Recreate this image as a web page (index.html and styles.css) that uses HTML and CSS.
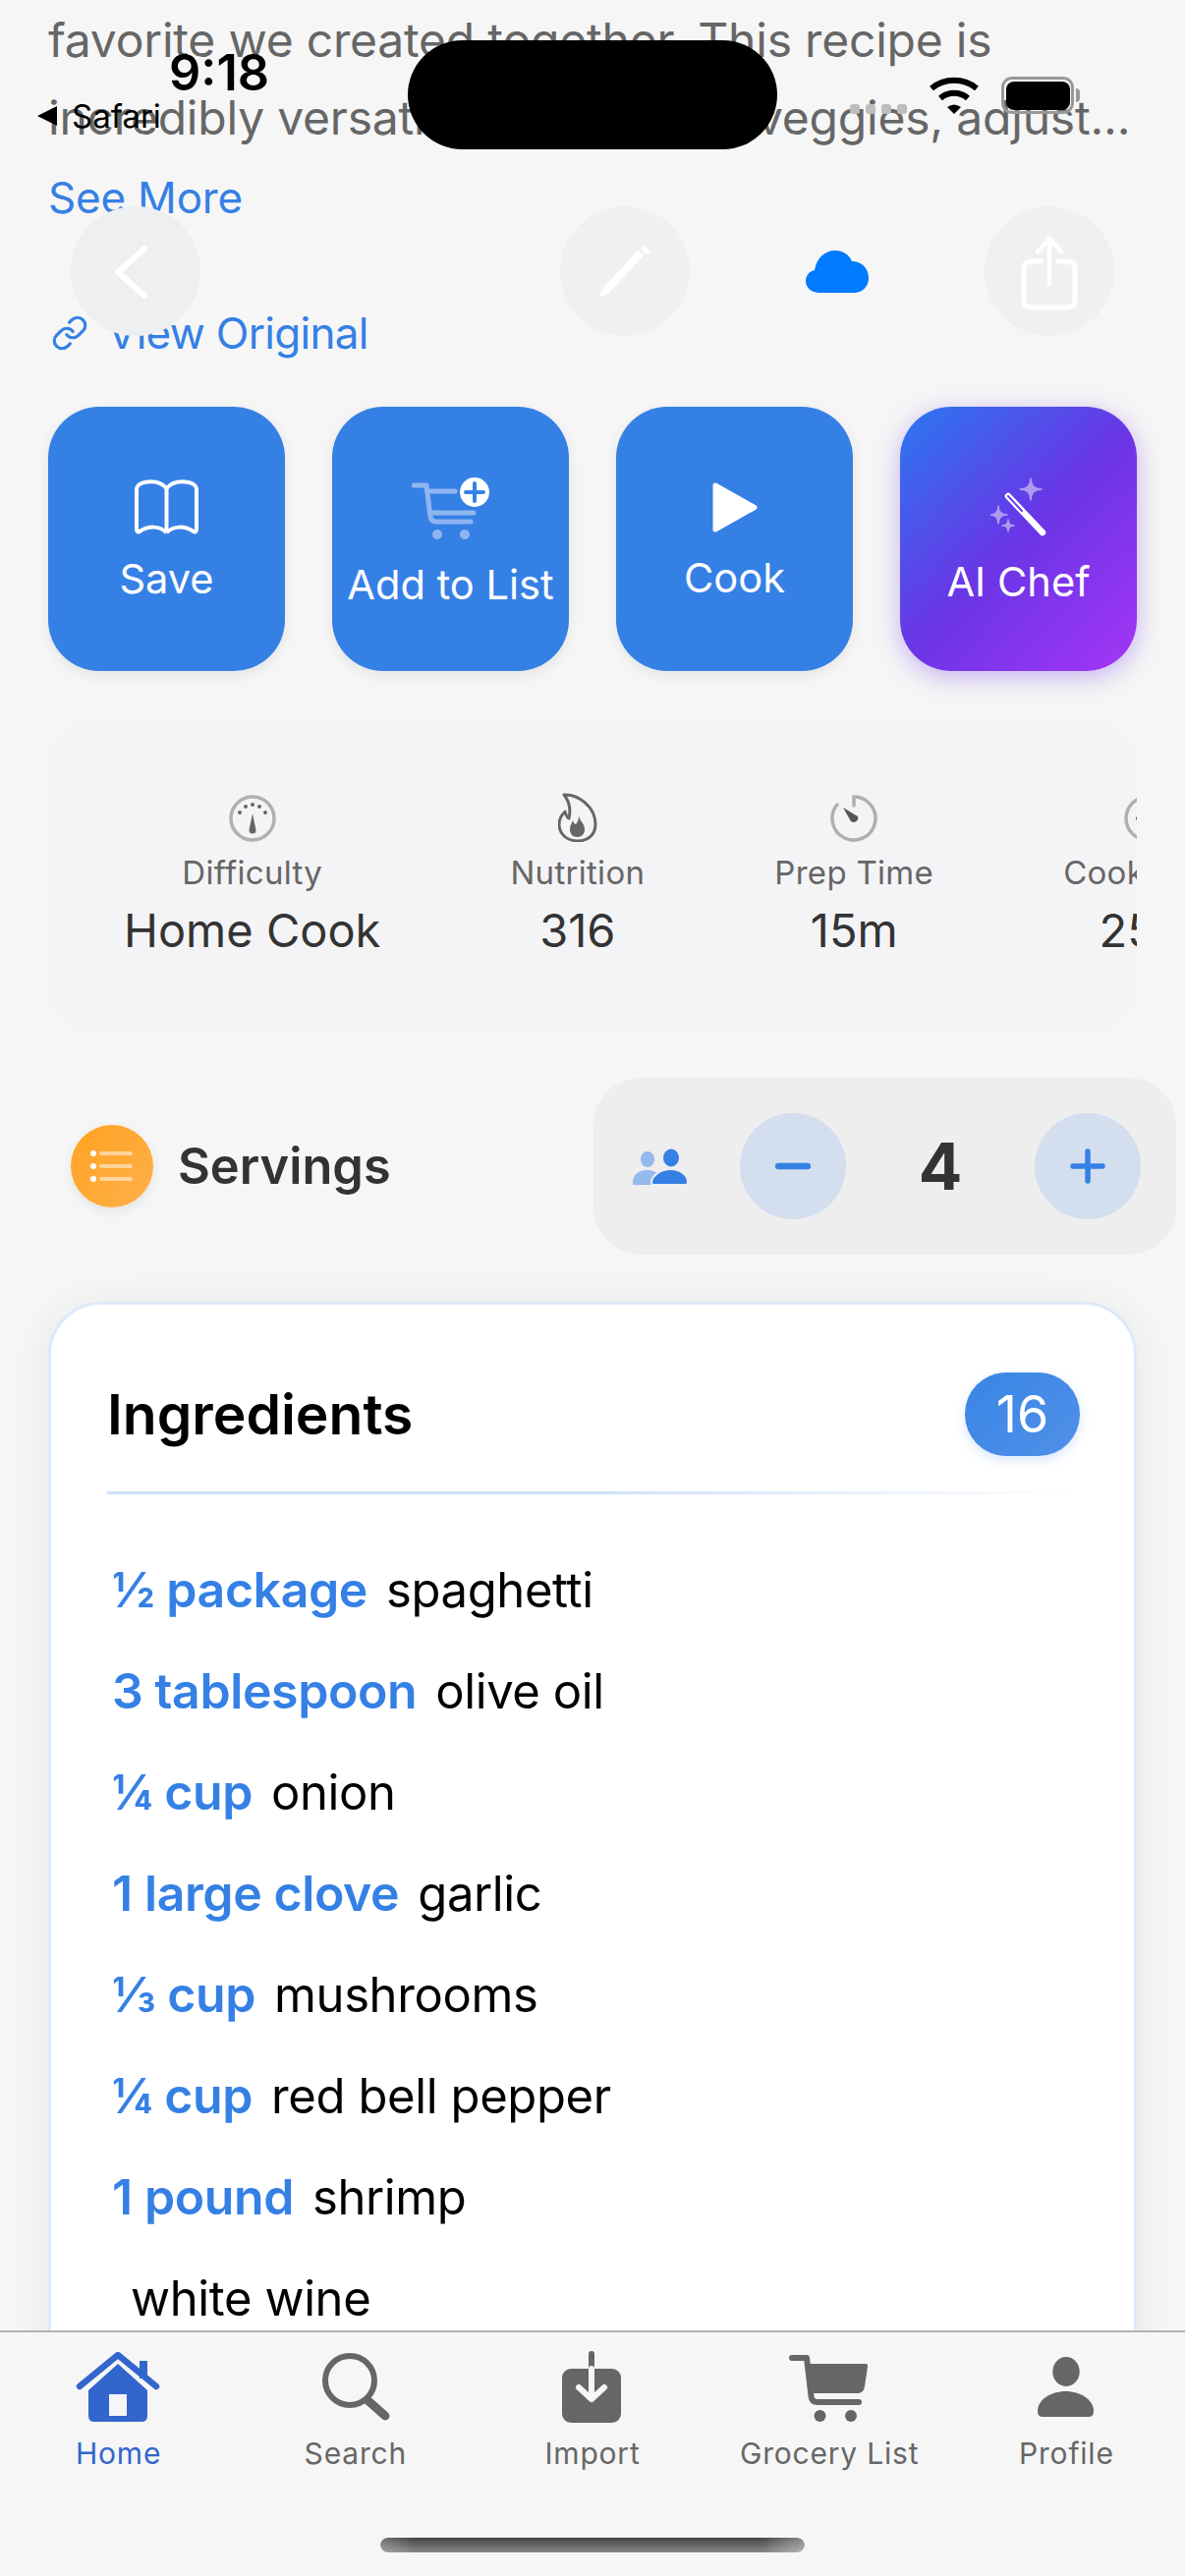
FILE: index.html
```html
<!DOCTYPE html>
<html lang="en">
<head>
    <meta charset="UTF-8">
    <meta name="viewport" content="width=device-width, initial-scale=1.0">
    <title>Recipe</title>
    <link rel="stylesheet" href="styles.css">
</head>
<body>
<div class="screen">

    <main class="scroll">
        <p class="description">favorite we created together. This recipe is incredibly versatile. Add in your veggies, adjust...</p>
        <a class="see-more">See More</a>
        <a class="view-original">
            <svg width="38" height="38" viewBox="0 0 24 24" fill="none" stroke="#3580e5" stroke-width="2" stroke-linecap="round" stroke-linejoin="round">
                <path d="M10 13a5 5 0 0 0 7.54.54l3-3a5 5 0 0 0-7.07-7.07l-1.72 1.71"/>
                <path d="M14 11a5 5 0 0 0-7.54-.54l-3 3a5 5 0 0 0 7.07 7.07l1.71-1.71"/>
            </svg>
            View Original
        </a>

        <div class="actions">
            <button class="action">
                <svg width="65" height="59" viewBox="0 0 65 59" fill="none" stroke="#fff" stroke-width="4" stroke-linejoin="round">
                    <path d="M32.5 12C27 6 18 4.5 10 6 5 7 2 10 2 13V54C2 56 3.5 57 5 56 14 50 25 50 32.5 57"/>
                    <path d="M32.5 12C38 6 47 4.5 55 6 60 7 63 10 63 13V54C63 56 61.5 57 60 56 51 50 40 50 32.5 57"/>
                    <path d="M32.5 12V57"/>
                </svg>
                <span>Save</span>
            </button>
            <button class="action">
                <svg width="79" height="71" viewBox="0 0 79 71" fill="none">
                    <g stroke="#8fb5f0" stroke-width="5" stroke-linecap="round" stroke-linejoin="round">
                        <path d="M2 15H15L19 47Q20 52 25 52H60"/>
                        <path d="M16 21H44"/>
                        <path d="M19 43H63"/>
                    </g>
                    <circle cx="26" cy="65" r="5" fill="#8fb5f0"/>
                    <circle cx="54" cy="65" r="5" fill="#8fb5f0"/>
                    <circle cx="64" cy="22" r="15" fill="#fff"/>
                    <path d="M64 13V31M55 22H73" stroke="#3580e5" stroke-width="4" stroke-linecap="round"/>
                </svg>
                <span>Add to List</span>
            </button>
            <button class="action">
                <svg width="46" height="57" viewBox="0 0 46 57">
                    <path d="M3 8V53L43 30.5Z" fill="#fff" stroke="#fff" stroke-width="5" stroke-linejoin="round"/>
                </svg>
                <span>Cook</span>
            </button>
            <button class="action action-ai">
                <svg width="57" height="65" viewBox="0 0 57 65" fill="none">
                    <path d="M18 23L53 60" stroke="#fff" stroke-width="6.500" stroke-linecap="round"/>
                    <path d="M18 23L32 38" stroke="#6246e6" stroke-width="2" stroke-linecap="round"/>
                    <path d="M41 5Q41 16 52 16 41 16 41 27 41 16 30 16 41 16 41 5ZM8 33Q8 42 17 42 8 42 8 51 8 42 0 42 8 42 8 33ZM18 47Q18 53 24 53 18 53 18 59 18 53 12 53 18 53 18 47Z" fill="#ac9cf0" stroke="#ac9cf0" stroke-width="1.6" stroke-linejoin="round"/>
                </svg>
                <span>AI Chef</span>
            </button>
        </div>

        <div class="stats">
            <div class="stat">
                <svg width="48" height="48" viewBox="0 0 48 48" fill="none">
                    <circle cx="24" cy="24" r="22" stroke="#b0b0b0" stroke-width="3.5"/>
                    <g fill="#666">
                        <circle cx="24" cy="10" r="2"/><circle cx="17" cy="12" r="2"/><circle cx="31" cy="12" r="2"/>
                        <circle cx="11" cy="18" r="2"/><circle cx="37" cy="18" r="2"/>
                        <path d="M24 19L27.5 36A3.5 3.5 0 0 1 20.500 36Z"/>
                    </g>
                </svg>
                <span class="stat-label">Difficulty</span>
                <span class="stat-value">Home Cook</span>
            </div>
            <div class="stat">
                <svg class="flame" width="40" height="50" viewBox="0 0 40 50" fill="none">
                    <path d="M6 2C20 1 38 14 38 32 38 43 30 49 20 49 9 49 1 42 1 32 1 26 4 22 7 19 8 23 9 25 11 26 13 17 11 8 6 2Z" stroke="#666" stroke-width="3" stroke-linejoin="round"/>
                    <path d="M21 23C22 29 27 31 27 37 27 42 24 45 19.500 45 15 45 12 42 12 37 12 33 14 31 15 28 16 31 17 32 18 32 20 30 21 27 21 23Z" fill="#666"/>
                </svg>
                <span class="stat-label">Nutrition</span>
                <span class="stat-value">316</span>
            </div>
            <div class="stat">
                <svg width="48" height="48" viewBox="0 0 48 48" fill="none">
                    <path d="M24 11V2A22 22 0 1 1 7 10" stroke="#b0b0b0" stroke-width="3.5" stroke-linecap="round"/>
                    <path d="M13 13L28 22A4.500 4.500 0 0 1 21 27Z" fill="#555"/>
                </svg>
                <span class="stat-label">Prep Time</span>
                <span class="stat-value">15m</span>
            </div>
            <div class="stat">
                <svg width="48" height="48" viewBox="0 0 48 48" fill="none">
                    <circle cx="24" cy="24" r="22" stroke="#b0b0b0" stroke-width="3.5"/>
                    <path d="M12 24H28" stroke="#666" stroke-width="3"/>
                </svg>
                <span class="stat-label">Cook Time</span>
                <span class="stat-value">25m</span>
            </div>
        </div>

        <div class="servings">
            <div class="servings-title">
                <span class="list-badge">
                    <svg width="84" height="84" viewBox="0 0 84 84" fill="none">
                        <g fill="#fff"><circle cx="23" cy="29" r="3"/><circle cx="23" cy="42" r="3"/><circle cx="23" cy="55" r="3"/></g>
                        <path d="M31 29H61M31 42H61M31 55H61" stroke="#fff" stroke-opacity=".5" stroke-width="4" stroke-linecap="round"/>
                    </svg>
                </span>
                <span class="servings-name">Servings</span>
            </div>
            <div class="stepper">
                <svg class="people" width="56" height="37" viewBox="0 0 56 37">
                    <ellipse cx="15" cy="11" rx="7" ry="8" fill="#94b9ec"/>
                    <path d="M0 37V34C0 26 7 22 14 22 20 22 24 24 27 27V37Z" fill="#94b9ec"/>
                    <ellipse cx="39" cy="9.500" rx="8" ry="9" fill="#3580e5"/>
                    <path d="M21 37Q19 37 19 34C20 27 29 21 38.500 21 48 21 56 27 56 34Q56 37 54 37Z" fill="#3580e5" stroke="#eee" stroke-width="2"/>
                </svg>
                <button class="step">
                    <svg width="36" height="36" viewBox="0 0 36 36"><path d="M3 18H33" stroke="#3580e5" stroke-width="6.500" stroke-linecap="round"/></svg>
                </button>
                <span class="count">4</span>
                <button class="step">
                    <svg width="36" height="36" viewBox="0 0 36 36"><path d="M3 18H33M18 3V33" stroke="#3580e5" stroke-width="5.500" stroke-linecap="round"/></svg>
                </button>
            </div>
        </div>

        <section class="card">
            <div class="card-head">
                <h2>Ingredients</h2>
                <span class="badge">16</span>
            </div>
            <div class="divider"></div>
            <ul class="ingredients">
                <li><b>½ package</b><span>spaghetti</span></li>
                <li><b>3 tablespoon</b><span>olive oil</span></li>
                <li><b>¼ cup</b><span>onion</span></li>
                <li><b>1 large clove</b><span>garlic</span></li>
                <li><b>⅓ cup</b><span>mushrooms</span></li>
                <li><b>¼ cup</b><span>red bell pepper</span></li>
                <li><b>1 pound</b><span>shrimp</span></li>
                <li><b></b><span>white wine</span></li>
            </ul>
        </section>
    </main>

    <nav class="tabbar">
        <a class="tab tab-active">
            <svg width="100" height="74" viewBox="0 0 100 74">
                <path d="M49 13L79 40V66Q79 72 73 72H25Q19 72 19 66V40ZM40 44V66H58V44Z" fill="#3366cc" fill-rule="evenodd"/>
                <path d="M71 10H79V28H71Z" fill="#3366cc"/>
                <path d="M10 36L49 4 88 36" fill="none" stroke="#3366cc" stroke-width="6.500" stroke-linecap="round" stroke-linejoin="round"/>
            </svg>
            <span>Home</span>
        </a>
        <a class="tab">
            <svg width="100" height="74" viewBox="0 0 100 74" fill="none" stroke="#666" stroke-linecap="round">
                <circle cx="44" cy="30" r="25" stroke-width="6"/>
                <path d="M62 50L80 66" stroke-width="9"/>
            </svg>
            <span>Search</span>
        </a>
        <a class="tab">
            <svg width="100" height="74" viewBox="0 0 100 74" fill="none" stroke-linecap="round" stroke-linejoin="round">
                <rect x="19" y="18" width="60" height="55" rx="9" fill="#666"/>
                <path d="M49 3V18" stroke="#666" stroke-width="6"/>
                <path d="M49 18V49M36 37L49 49 62 37" stroke="#f6f6f6" stroke-width="6"/>
            </svg>
            <span>Import</span>
        </a>
        <a class="tab">
            <svg width="100" height="74" viewBox="0 0 100 74" fill="none">
                <path d="M12 7H27L31.500 46Q32 52 38 52H80" stroke="#666" stroke-width="6" stroke-linecap="round" stroke-linejoin="round"/>
                <path d="M27 13H87Q89.500 13 89 16L86 36Q85 43 79 43H31Z" fill="#666"/>
                <circle cx="40.500" cy="66" r="6" fill="#666"/>
                <circle cx="72" cy="66" r="6" fill="#666"/>
            </svg>
            <span>Grocery List</span>
        </a>
        <a class="tab">
            <svg width="100" height="74" viewBox="0 0 100 74" fill="#666">
                <ellipse cx="50" cy="21" rx="13.700" ry="15"/>
                <path d="M21 61C21 50 34 41 49.500 41 65 41 78 50 78 61Q78 67 73 67H26Q21 67 21 61Z"/>
            </svg>
            <span>Profile</span>
        </a>
    </nav>
    <div class="home-bar"></div>

    <!-- status bar and floating header sit over the scrolled content -->
    <div class="island"></div>
    <span class="time">9:18</span>
    <span class="back-app">
        <svg width="22" height="20" viewBox="0 0 22 20"><path d="M0 10L20 0V20Z" fill="#000"/></svg>
        Safari
    </span>
    <div class="status-right">
        <span class="signal"><i></i><i></i><i></i><i></i></span>
        <svg width="52" height="38" viewBox="0 0 52 38" fill="none" stroke="#000" stroke-width="6">
            <path d="M3 12C16 1 36 1 49 12"/>
            <path d="M12 22C20 15 32 15 40 22"/>
            <path d="M19 31Q26 26 33 31L26 38Z" fill="#000" stroke="none"/>
        </svg>
        <span class="battery"></span>
    </div>

    <div class="top-actions">
        <button class="round">
            <svg width="132" height="132" viewBox="0 0 132 132" fill="none"><path d="M75 43L48 67 75 91" stroke="#fff" stroke-width="6" stroke-linecap="round" stroke-linejoin="round"/></svg>
        </button>
        <div class="top-right">
            <button class="round round-light">
                <svg width="132" height="132" viewBox="0 0 132 132" fill="#fff"><path d="M40 92L43 84 79 45 85 50 49 89ZM82 43L85 41Q86 40 87 41L91 45Q92 46 91 47L88 49Z"/></svg>
            </button>
            <span class="cloud">
                <svg width="64" height="43" viewBox="0 0 64 43"><path d="M14 43C6 43 0 38 0 31 0 25 4 21 9 20 11 8 19 0 30 0 38 0 44 4 47 11 57 11 64 18 64 28 64 37 57 43 49 43Z" fill="#007aff"/></svg>
            </span>
            <button class="round round-light">
                <svg width="132" height="132" viewBox="0 0 132 132" fill="none" stroke="#fff" stroke-linecap="round" stroke-linejoin="round">
                    <path d="M57 56H48Q40 56 40 64V95Q40 103 48 103H84Q92 103 92 95V64Q92 56 84 56H75" stroke-width="5"/>
                    <path d="M66 79V35M54 46L66 33 78 46" stroke-width="4.500"/>
                </svg>
            </button>
        </div>
    </div>

</div>
</body>
</html>
```

FILE: styles.css
```css
* {
    box-sizing: border-box;
}
body {
    margin: 0;
    font-family: Inter, "Noto Sans", sans-serif;
    background-color: #f6f6f6;
}
button {
    border: none;
    padding: 0;
    font: inherit;
    cursor: pointer;
}
svg {
    display: block;
    flex-shrink: 0;
}
.screen {
    position: relative;
    display: flex;
    flex-direction: column;
    width: 1206px;
    height: 2622px;
    overflow: hidden;
    background-color: #f6f6f6;
}
.scroll {
    flex: 1;
    min-height: 0;
    overflow: hidden;
    padding: 1px 49px 0;
}

/* top text */
.description {
    margin: 0;
    font-size: 48px;
    line-height: 79px;
    color: #666;
    letter-spacing: -0.2px;
}
.see-more,
.view-original {
    display: flex;
    align-items: center;
    font-size: 44px;
    line-height: 60px;
    color: #3580e5;
}
.see-more {
    margin-top: 12px;
    letter-spacing: -0.2px;
}
.view-original {
    gap: 19px;
    margin-top: 78px;
    padding-left: 3px;
    letter-spacing: -0.7px;
}

/* action buttons */
.actions {
    display: flex;
    gap: 48px;
    margin-top: 45px;
}
.action {
    display: flex;
    flex-direction: column;
    align-items: center;
    justify-content: center;
    gap: 20px;
    width: 241px;
    height: 269px;
    padding-top: 1px;
    border-radius: 52px;
    background-color: #3580e5;
    color: #fff;
    font-size: 41.600px;
    line-height: 50px;
    box-shadow: 0 4px 14px rgba(0, 0, 0, 0.08);
}
.action-ai {
    background: linear-gradient(135deg, #2a78f0 0%, #6a35e6 50%, #a436f5 100%);
    box-shadow: 0 6px 26px rgba(106, 53, 230, 0.35);
}

/* stats strip */
.stats {
    display: flex;
    gap: 132px;
    height: 318px;
    margin-top: 49px;
    padding: 77px 0 0 77px;
    overflow: hidden;
    border-radius: 50px;
    background-color: #f4f4f6;
}
.stat {
    display: flex;
    flex-direction: column;
    align-items: center;
    flex-shrink: 0;
}
.flame {
    margin-top: -2px;
}
.stat-label {
    margin-top: 11px;
    font-size: 33px;
    line-height: 40px;
    letter-spacing: 0.3px;
    color: #666;
}
.stat-value {
    margin-top: 11px;
    font-size: 47px;
    line-height: 56px;
    color: #333;
}

/* servings */
.servings {
    display: flex;
    align-items: center;
    justify-content: space-between;
    margin: 47px -40px 0 23px;
}
.servings-title {
    display: flex;
    align-items: center;
    gap: 25px;
    font-size: 50.500px;
    font-weight: 600;
    color: #333;
}
.servings-name {
    padding-bottom: 2px;
}
.list-badge {
    width: 84px;
    height: 84px;
    border-radius: 50%;
    background: linear-gradient(135deg, #ffa322, #ffb04a);
    box-shadow: 0 4px 12px rgba(0, 0, 0, 0.08);
}
.stepper {
    display: flex;
    align-items: center;
    height: 180px;
    padding: 0 36px 0 40px;
    border-radius: 48px;
    background-color: #eee;
}
.people {
    margin-right: 53px;
}
.step {
    display: flex;
    align-items: center;
    justify-content: center;
    width: 108px;
    height: 108px;
    border-radius: 50%;
    background-color: #d3deee;
}
.count {
    width: 192px;
    text-align: center;
    font-size: 66px;
    font-weight: 700;
    color: #333;
}

/* ingredients card */
.card {
    height: 1400px;
    margin-top: 48px;
    padding: 69px 55px 0 57px;
    border: 3px solid #dde9fb;
    border-radius: 54px;
    background-color: #fff;
    box-shadow: 0 6px 44px rgba(0, 0, 0, 0.07);
}
.card-head {
    display: flex;
    align-items: center;
    justify-content: space-between;
}
.card-head h2 {
    margin: 0;
    font-size: 57px;
    font-weight: 600;
    color: #000;
}
.badge {
    width: 117px;
    height: 85px;
    border-radius: 42px;
    background: linear-gradient(135deg, #3a85e6, #5090e8);
    color: #fff;
    font-size: 52px;
    line-height: 85px;
    text-align: center;
    box-shadow: 0 4px 12px rgba(53, 128, 229, 0.2);
}
.divider {
    height: 3px;
    margin-top: 36px;
    background: linear-gradient(90deg, #cfe0fa, #cfe0fa 50%, rgba(207, 224, 250, 0));
}
.ingredients {
    margin: 46px 0 0;
    padding: 0 0 0 5px;
    list-style: none;
}
.ingredients li {
    display: flex;
    gap: 19px;
    font-size: 49px;
    line-height: 103px;
    letter-spacing: -0.4px;
    color: #000;
}
.ingredients b {
    font-size: 50px;
    font-weight: 600;
    color: #3580e5;
}

/* tab bar */
.tabbar {
    display: grid;
    grid-template-columns: repeat(5, 1fr);
    height: 250px;
    padding-top: 19px;
    border-top: 2px solid #b3b3b3;
    background-color: #f6f6f6;
}
.tab {
    display: flex;
    flex-direction: column;
    align-items: center;
    gap: 10px;
    font-size: 30px;
    line-height: 40px;
    letter-spacing: 0.8px;
    color: #666;
}
.tab-active {
    color: #3366cc;
}
.home-bar {
    position: absolute;
    left: 387px;
    top: 2583px;
    width: 432px;
    height: 15px;
    border-radius: 8px;
    background: linear-gradient(180deg, #444, #888);
    -webkit-mask-image: linear-gradient(90deg, rgba(0, 0, 0, 0.75), #000 8%, #000 90%, rgba(0, 0, 0, 0.6));
    mask-image: linear-gradient(90deg, rgba(0, 0, 0, 0.75), #000 8%, #000 90%, rgba(0, 0, 0, 0.6));
}

/* status bar */
.island {
    position: absolute;
    left: 415px;
    top: 41px;
    width: 376px;
    height: 111px;
    border-radius: 56px;
    background-color: #000;
}
.time {
    position: absolute;
    left: 172px;
    top: 44px;
    font-size: 50.500px;
    line-height: 60px;
    font-weight: 600;
    color: #000;
}
.back-app {
    position: absolute;
    left: 38px;
    top: 100px;
    display: flex;
    align-items: center;
    gap: 13px;
    font-size: 33px;
    line-height: 36px;
    color: #000;
}
.status-right {
    position: absolute;
    left: 865px;
    top: 78px;
    display: flex;
    gap: 22px;
}
.signal {
    display: flex;
    gap: 6px;
    margin-top: 28px;
}
.signal i {
    width: 10px;
    height: 10px;
    border-radius: 3px;
    background-color: #bdbdbd;
}
.battery {
    position: relative;
    width: 74px;
    height: 38px;
    border: 3px solid #999;
    border-radius: 11px;
}
.battery::before {
    content: "";
    position: absolute;
    inset: 2px 1px 1px 2px;
    border-radius: 8px;
    background-color: #000;
}
.battery::after {
    content: "";
    position: absolute;
    right: -9px;
    top: 9px;
    width: 4px;
    height: 14px;
    border-radius: 0 4px 4px 0;
    background-color: #999;
}

/* floating header */
.top-actions {
    position: absolute;
    left: 72px;
    right: 72px;
    top: 210px;
    display: flex;
    justify-content: space-between;
}
.top-right {
    display: flex;
    align-items: center;
    gap: 84px;
}
.round {
    width: 132px;
    height: 132px;
    border-radius: 50%;
    background-color: #eeeff1;
}
.round-light {
    background-color: #f0f0f0;
}
.cloud {
    display: flex;
    justify-content: center;
    width: 132px;
}
```
